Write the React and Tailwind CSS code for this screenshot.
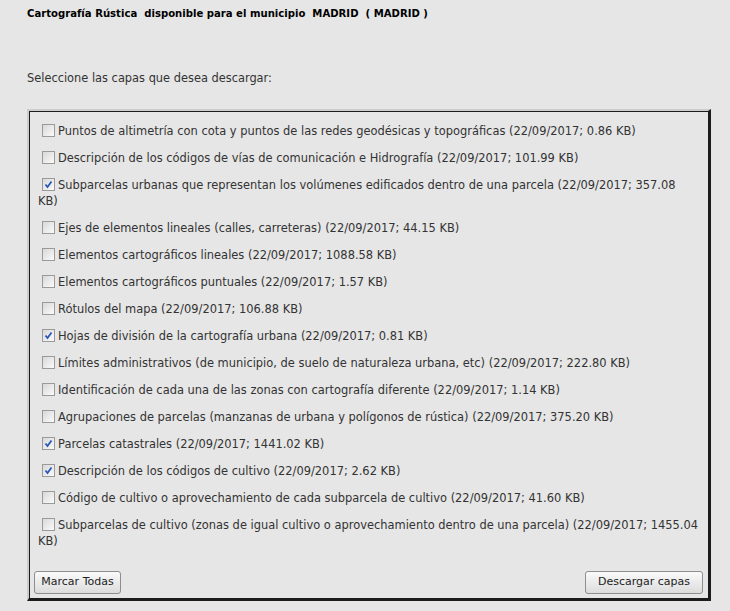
import { useState } from 'react'

const capas = [
  { t: 'Puntos de altimetría con cota y puntos de las redes geodésicas y topográficas (22/09/2017; 0.86 KB)', c: false },
  { t: 'Descripción de los códigos de vías de comunicación e Hidrografía (22/09/2017; 101.99 KB)', c: false },
  { t: 'Subparcelas urbanas que representan los volúmenes edificados dentro de una parcela (22/09/2017; 357.08', r: 'KB)', c: true },
  { t: 'Ejes de elementos lineales (calles, carreteras) (22/09/2017; 44.15 KB)', c: false },
  { t: 'Elementos cartográficos lineales (22/09/2017; 1088.58 KB)', c: false },
  { t: 'Elementos cartográficos puntuales (22/09/2017; 1.57 KB)', c: false },
  { t: 'Rótulos del mapa (22/09/2017; 106.88 KB)', c: false },
  { t: 'Hojas de división de la cartografía urbana (22/09/2017; 0.81 KB)', c: true },
  { t: 'Límites administrativos (de municipio, de suelo de naturaleza urbana, etc) (22/09/2017; 222.80 KB)', c: false },
  { t: 'Identificación de cada una de las zonas con cartografía diferente (22/09/2017; 1.14 KB)', c: false },
  { t: 'Agrupaciones de parcelas (manzanas de urbana y polígonos de rústica) (22/09/2017; 375.20 KB)', c: false },
  { t: 'Parcelas catastrales (22/09/2017; 1441.02 KB)', c: true },
  { t: 'Descripción de los códigos de cultivo (22/09/2017; 2.62 KB)', c: true },
  { t: 'Código de cultivo o aprovechamiento de cada subparcela de cultivo (22/09/2017; 41.60 KB)', c: false },
  { t: 'Subparcelas de cultivo (zonas de igual cultivo o aprovechamiento dentro de una parcela) (22/09/2017; 1455.04', r: 'KB)', c: false },
]

function Check({ checked }) {
  return (
    <span className="inline-block w-[13px] h-[13px] ml-[4px] mr-[3px] align-[-2px] border border-[#9a9a9a] bg-gradient-to-br from-[#d8d8d8] to-[#fbfbfb] relative">
      {checked && (
        <svg viewBox="0 0 11 11" className="absolute inset-0 w-[11px] h-[11px]">
          <path d="M2.5 5.5 L4.5 8 L8.5 2.5" fill="none" stroke="#2b57b8" strokeWidth="1.8" />
        </svg>
      )}
    </span>
  )
}

export default function App() {
  const [items] = useState(capas)

  return (
    <div className="min-h-[611px] bg-[#e6e6e6] pl-[27px] pr-[19px] pt-[7px] pb-[10px] text-[#333] font-['DejaVu_Sans',sans-serif] text-[11px]">
      <p className="font-bold text-black whitespace-pre text-[10.1px] leading-[14px]">
        {'Cartografía Rústica  disponible para el municipio  MADRID  ( MADRID )'}
      </p>
      <p className="mt-[50px] text-[11.4px] leading-[14px]">Seleccione las capas que desea descargar:</p>

      <div className="mt-[24px] border-t-2 border-l-2 border-t-[#cdcdcd] border-l-[#cdcdcd] border-r-[3px] border-b-[3px] border-r-[#1c1c1c] border-b-[#1c1c1c]">
        <div className="border-t border-l border-[#1c1c1c] pl-[8px] pr-[6px] pt-[11px] pb-[4px] h-[487px] flex flex-col">
          <div className="flex flex-col gap-[11px] text-[11.45px] leading-[16px]">
            {items.map((it, i) => (
              <label key={i} className="block cursor-default">
                <Check checked={it.c} />
                {it.t}
                {it.r && (
                  <>
                    <br />
                    {it.r}
                  </>
                )}
              </label>
            ))}
          </div>
          <div className="mt-auto -ml-[4px] -mr-[1px] flex justify-between">
            <button className="h-[23px] w-[87px] rounded-[3px] border border-[#8e8e8e] bg-gradient-to-b from-[#fafafa] to-[#dcdcdc] text-[11px] text-[#222]">
              Marcar Todas
            </button>
            <button className="h-[23px] w-[118px] rounded-[3px] border border-[#8e8e8e] bg-gradient-to-b from-[#fafafa] to-[#dcdcdc] text-[11px] text-[#222]">
              Descargar capas
            </button>
          </div>
        </div>
      </div>
    </div>
  )
}
